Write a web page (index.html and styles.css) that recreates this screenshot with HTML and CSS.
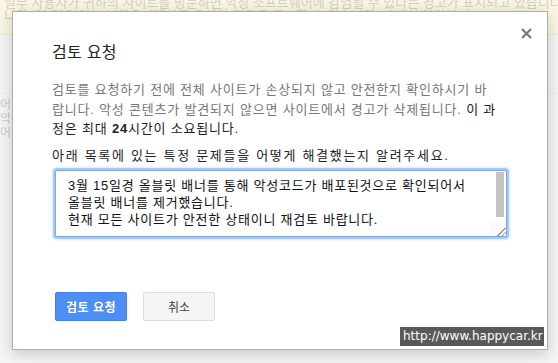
FILE: index.html
```html
<!DOCTYPE html>
<html lang="ko">
<head>
    <meta charset="UTF-8">
    <meta name="viewport" content="width=device-width, initial-scale=1.0">
    <title>검토 요청</title>
    <link rel="stylesheet" href="styles.css">
</head>
<body>
    <div class="page">
        <div class="notice">
            <p>일부 사용자가 귀하의 사이트를 방문하면 악성 소프트웨어에 감염될 수 있다는 경고가 표시되고 있습니다.</p>
            <p>니다. 이 경우 일부 브라우저에서도 유사한 경고를 표시할 수 있습니다. 자세히 알아보기</p>
        </div>
        <div class="content">
            <div class="side">
                <p>어</p>
                <p>악성</p>
                <p>어</p>
            </div>
        </div>
    </div>

    <div class="dialog">
        <button class="close" type="button" aria-label="닫기">
            <svg width="11" height="11" viewBox="0 0 11 11">
                <path d="M1 1L10 10M10 1L1 10" stroke="#777" stroke-width="2.2" fill="none"/>
            </svg>
        </button>
        <h2 class="title">검토 요청</h2>
        <p class="intro">검토를 요청하기 전에 전체 사이트가 손상되지 않고 안전한지 확인하시기 바<br>랍니다. 악성 콘텐츠가 발견되지 않으면 사이트에서 경고가 삭제됩니다. <span class="dark">이 과<br>정은 최대 <b>24</b>시간이 소요됩니다.</span></p>
        <p class="ask">아래 목록에 있는 특정 문제들을 어떻게 해결했는지 알려주세요.</p>
        <div class="field">
            <textarea class="answer">3월 15일경 올블릿 배너를 통해 악성코드가 배포된것으로 확인되어서
올블릿 배너를 제거했습니다.
현재 모든 사이트가 안전한 상태이니 재검토 바랍니다.</textarea>
            <div class="scroll-thumb"></div>
        </div>
        <div class="buttons">
            <button class="btn btn-primary" type="button">검토 요청</button>
            <button class="btn" type="button">취소</button>
        </div>
    </div>

    <div class="watermark">http://www.happycar.kr</div>
</body>
</html>
```

FILE: styles.css
```css
body {
    margin: 0;
    font-family: "Liberation Sans", "Noto Sans CJK KR", sans-serif;
    background-color: #f7f7f7;
    color: #222;
    overflow: hidden;
}

.page {
    height: 363px;
}

.notice {
    height: 34px;
    background-color: #fcf7e4;
    border-bottom: 1px solid #eee9d6;
    overflow: hidden;
}

.notice p {
    margin: 0;
    padding-left: 4px;
    font-size: 13px;
    line-height: 13px;
    white-space: nowrap;
    color: #d6d2c2;
}

.notice p:first-child {
    margin-top: -4px;
}

.content {
    border-top: 1px solid #eee;
    margin-top: 58px;
}

.side {
    padding-top: 4px;
}

.side p {
    margin: 0;
    font-size: 12px;
    line-height: 14px;
    color: #ccc;
}

/* dialog sits over the page */
.dialog {
    position: absolute;
    left: 12px;
    top: 11px;
    width: 536px;
    height: 339px;
    box-sizing: border-box;
    padding: 31px 40px 0 39px;
    background-color: #fff;
    border: 1px solid #acacac;
    box-shadow: 0 4px 16px rgba(0, 0, 0, 0.2);
}

.close {
    position: absolute;
    top: 16px;
    right: 15px;
    padding: 0;
    border: none;
    background: none;
    cursor: pointer;
}

.close svg {
    display: block;
}

.title {
    margin: 0;
    font-size: 16px;
    line-height: 20px;
    font-weight: normal;
    letter-spacing: 0.3px;
    color: #222;
}

.intro {
    margin: 17px 0 0;
    font-size: 13px;
    line-height: 19.5px;
    letter-spacing: 0.8px;
    white-space: nowrap;
    color: #777;
}

.intro .dark {
    color: #222;
}

.ask {
    margin: 7px 0 0;
    font-size: 13px;
    line-height: 19.5px;
    letter-spacing: 1.7px;
    color: #222;
}

.field {
    position: relative;
    width: 452px;
    margin: 5px 0 0 3px;
}

.answer {
    display: block;
    box-sizing: border-box;
    width: 452px;
    height: 67px;
    margin: 0;
    padding: 6px 0 0 12px;
    font-family: "Liberation Sans", "Noto Sans CJK KR", sans-serif;
    font-size: 13px;
    line-height: 17px;
    letter-spacing: 0.75px;
    color: #111;
    border: 1px solid #7aa7e0;
    border-radius: 2px;
    box-shadow: 0 0 0 2px #a9c9ef, 0 0 3px 2px rgba(110, 160, 225, 0.5);
    outline: none;
    overflow: hidden;
    resize: both;
}

.answer::-webkit-resizer {
    background: linear-gradient(135deg, transparent 70%, #999 70%, #999 75%, transparent 75%, transparent 85%, #999 85%, #999 90%, transparent 90%);
    background-color: #fafafa;
}

.scroll-thumb {
    position: absolute;
    top: 2px;
    right: 3px;
    width: 8px;
    height: 45px;
    background-color: #c3c3c3;
}

.buttons {
    display: flex;
    gap: 16px;
    margin-top: 55px;
    margin-left: 3px;
}

.btn {
    width: 72px;
    height: 29px;
    padding: 0;
    font-family: "Liberation Sans", "Noto Sans CJK KR", sans-serif;
    font-size: 12px;
    color: #444;
    background-color: #f5f5f5;
    border: 1px solid #dcdcdc;
    border-radius: 2px;
    cursor: pointer;
}

.btn-primary {
    color: #fff;
    font-weight: bold;
    letter-spacing: 0.5px;
    background-color: #4d8ef5;
    border-color: #3f80ea;
}

.watermark {
    position: absolute;
    left: 400px;
    top: 327px;
    width: 144px;
    height: 19px;
    box-sizing: border-box;
    padding: 0 3px;
    font-family: "DejaVu Sans", sans-serif;
    font-size: 12px;
    line-height: 19px;
    color: #fff;
    background-color: #595959;
    white-space: nowrap;
}
```
